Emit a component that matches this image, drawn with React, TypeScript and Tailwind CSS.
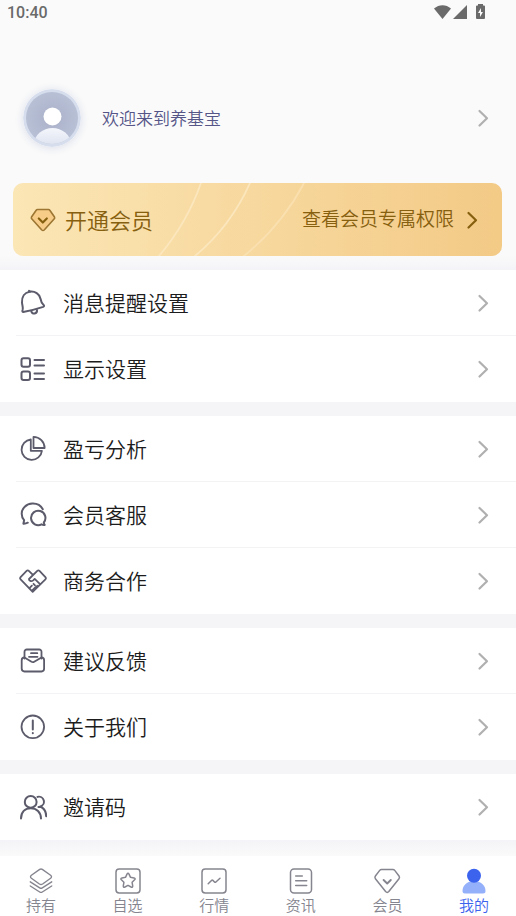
import React from "react";

type IconProps = { className?: string };

const stroke = {
  fill: "none",
  stroke: "currentColor",
  strokeLinecap: "round" as const,
  strokeLinejoin: "round" as const,
};

const Chevron = ({ className }: IconProps) => (
  <svg viewBox="0 0 12 20" className={className} {...stroke} strokeWidth={2.2} aria-hidden="true">
    <path d="M2.5 3l7.5 7.2L2.5 17.5" />
  </svg>
);

const BellIcon = () => (
  <svg viewBox="0 0 28 28" className="size-7" {...stroke} strokeWidth={2} aria-hidden="true">
    <path d="M4.2 22.9C3.2 23 3.2 22 3.6 21C4.4 18.8 3.2 16.500 3 13.500C2.700 8 5.500 3.600 10.500 2.700C16 1.800 20.600 5 21.500 9.700C22 12.300 22.400 14 24.400 15.700C25.400 16.600 25.300 17.500 24.200 17.900C18 20 11 21.800 4.200 22.900Z" />
    <path d="M10 1.900l1 .7M12.300 22.200c.4 1.700 1.700 2.700 3.400 2.300 1.600-.4 2.500-1.600 2.300-3.500" />
  </svg>
);

const DisplayIcon = () => (
  <svg viewBox="0 0 28 28" className="size-7" {...stroke} strokeWidth={2} aria-hidden="true">
    <rect x="2.5" y="3.2" width="8.5" height="8.5" rx="2" />
    <rect x="2.5" y="16.5" width="8.5" height="8.5" rx="2" />
    <path d="M15.5 5h9.5M15.5 10.5h9.5M15.5 18.5h9.5M15.5 24h9.5" />
  </svg>
);

const PieIcon = () => (
  <svg viewBox="0 0 28 28" className="size-7" {...stroke} strokeWidth={1.8} aria-hidden="true">
    <path d="M11.8 4.500A10.200 10.200 0 1 0 22.900 15.800H11.800Z" />
    <path d="M14.500 1.900V13H25.600A11.100 11.100 0 0 0 14.500 1.900Z" />
  </svg>
);

const ChatIcon = () => (
  <svg viewBox="0 0 28 28" className="size-7" {...stroke} strokeWidth={2} aria-hidden="true">
    <path d="M23.800 8.200C21.900 4.600 18 2.300 13.300 2.500C7.300 2.800 2.700 7.200 2.700 12.800C2.700 15.200 3.600 17.500 5.100 19.200L4.400 22.700C6 22.800 7.500 22.400 8.800 21.700" />
    <path d="M24.800 21.500A7.200 7.200 0 1 0 22.600 23.300C23.600 23.900 24.600 24.100 25.700 23.900C25.200 23.200 24.900 22.500 24.800 21.500Z" />
  </svg>
);

const HandshakeIcon = () => (
  <svg viewBox="0 0 28 28" className="size-7" {...stroke} strokeWidth={1.8} aria-hidden="true">
    <path d="M13.700 7.700L9.800 3.900C9.200 3.300 8.200 3.300 7.600 3.900L1.600 10.100C1 10.800 1 11.700 1.600 12.300L13.700 24.800L26.400 12.300C27 11.700 27 10.800 26.400 10.100L20.500 3.900C19.900 3.300 18.900 3.300 18.300 3.900L10 12C9.800 13.800 12.200 14.900 14.200 13.400L15.700 11.900L20.800 16.900" />
    <path d="M10.700 20.800l2.200-2.200M13.500 23.100l2.300-2.300M16.600 20.500l1.700-1.700M14.500 16.800l1.500 1.500" />
  </svg>
);

const MailIcon = () => (
  <svg viewBox="0 0 28 28" className="size-7" {...stroke} strokeWidth={1.8} aria-hidden="true">
    <path d="M5.500 11.500V4.800A2.300 2.300 0 0 1 7.800 2.500H20.200A2.300 2.300 0 0 1 22.500 4.800V11.500" />
    <path d="M5.500 10.500C3.500 10.500 2.700 11.500 2.700 13.200V21.600C2.700 23.600 3.700 24.500 5.500 24.500H22.500C24.300 24.500 25.100 23.600 25.100 21.600V13.200C25.100 11.500 24.300 10.500 22.500 10.500L15.200 14.700C14.300 15.200 13.400 15.200 12.500 14.700Z" />
    <path d="M12 6.200h6.300M10 9.800h8.500" />
  </svg>
);

const AboutIcon = () => (
  <svg viewBox="0 0 28 28" className="size-7" {...stroke} strokeWidth={1.8} aria-hidden="true">
    <circle cx="13.8" cy="13.8" r="11.3" />
    <path d="M13.8 7.5v9M13.8 20v.2" strokeWidth={2} />
  </svg>
);

const PeopleIcon = () => (
  <svg viewBox="0 0 28 28" className="size-7" {...stroke} strokeWidth={2} aria-hidden="true">
    <circle cx="11.7" cy="8.9" r="5.9" />
    <path d="M2 25.500C2 19 6 15.200 11.700 15.200S22 19 22 25.500" />
    <path d="M18.500 3.900A4.900 4.900 0 0 1 21.300 13.500C25 15.300 27.200 18.700 27.200 23.300M19.500 14H21" />
  </svg>
);

const LayersIcon = () => (
  <svg viewBox="0 0 28 28" className="size-7" {...stroke} strokeWidth={1.4} aria-hidden="true">
    <path d="M12.700 2.400Q14 1.600 15.300 2.400L23.600 8.200Q25.400 9.700 23.600 11.200L15.600 17Q14 17.900 12.400 17L4.400 11.200Q2.600 9.700 4.400 8.200Z" />
    <path d="M3.300 14.800L12.700 20.800Q14 21.600 15.300 20.800L24.700 14.800M3.300 19L12.700 25Q14 25.800 15.300 25L24.700 19" />
  </svg>
);

const StarIcon = () => (
  <svg viewBox="0 0 28 28" className="size-7" {...stroke} strokeWidth={1.5} aria-hidden="true">
    <rect x="2" y="2" width="24" height="24" rx="3.2" />
    <path d="M13 7.200Q14 5.500 15 7.200L16.500 10.300L20 10.900Q21.900 11.400 20.600 12.800L18.100 15.300L18.700 18.900Q18.800 20.800 17.100 20L14 18.300L10.900 20Q9.200 20.800 9.300 18.900L9.900 15.300L7.400 12.800Q6.100 11.400 8 10.900L11.500 10.300Z" />
  </svg>
);

const TrendIcon = () => (
  <svg viewBox="0 0 28 28" className="size-7" {...stroke} strokeWidth={1.5} aria-hidden="true">
    <rect x="2" y="2" width="24" height="24" rx="3.2" />
    <path d="M8.200 16.800L11.500 13.400Q12.200 12.700 12.900 13.400L14.500 15Q15.200 15.700 15.900 15L20 11.200" />
  </svg>
);

const NewsIcon = () => (
  <svg viewBox="0 0 28 28" className="size-7" {...stroke} strokeWidth={1.5} aria-hidden="true">
    <rect x="3.5" y="2" width="21" height="24" rx="3.5" />
    <path d="M8.700 9h6.600M8.700 13.800h11M8.700 18.600h11" />
  </svg>
);

const DiamondIcon = () => (
  <svg viewBox="0 0 28 28" className="size-7" {...stroke} strokeWidth={1.5} aria-hidden="true">
    <path d="M8.500 2.500H19.900Q21 2.500 21.700 3.400L26 9Q27 10.400 26 11.700L15.800 24.500Q14.200 26.300 12.600 24.500L2.400 11.700Q1.400 10.400 2.400 9L6.700 3.400Q7.400 2.500 8.500 2.500Z" />
    <path d="M10.600 13l3.600 3.500 3.600-3.500" strokeWidth={1.9} />
  </svg>
);

const MeIcon = () => (
  <svg viewBox="0 0 28 28" className="size-7" aria-hidden="true">
    <path d="M2.500 24C2.500 18.500 7 14 14 14S25.500 18.500 25.500 24Q25.500 26.500 23 26.500H5Q2.500 26.500 2.500 24Z" fill="#94b0fa" />
    <circle cx="14" cy="8.7" r="7" fill="#3c63ee" />
  </svg>
);

const groups = [
  [
    { label: "消息提醒设置", Icon: BellIcon },
    { label: "显示设置", Icon: DisplayIcon },
  ],
  [
    { label: "盈亏分析", Icon: PieIcon },
    { label: "会员客服", Icon: ChatIcon },
    { label: "商务合作", Icon: HandshakeIcon },
  ],
  [
    { label: "建议反馈", Icon: MailIcon },
    { label: "关于我们", Icon: AboutIcon },
  ],
  [{ label: "邀请码", Icon: PeopleIcon }],
];

const tabs = [
  { label: "持有", Icon: LayersIcon },
  { label: "自选", Icon: StarIcon },
  { label: "行情", Icon: TrendIcon },
  { label: "资讯", Icon: NewsIcon },
  { label: "会员", Icon: DiamondIcon },
  { label: "我的", Icon: MeIcon, active: true },
];

const StatusBar = () => (
  <div className="flex h-6 items-center justify-between pl-[7px] pr-7 text-[#6a6a6a]">
    <span className="pt-0.5 font-[Roboto,sans-serif] text-base leading-6 font-medium">10:40</span>
    <svg viewBox="0 0 56 18" className="h-[18px] w-14" fill="currentColor" aria-hidden="true">
      <path d="M2 5.500C7 1 14 1 19 5.500L10.500 16Z" />
      <path d="M35 2V16H21Z" />
      <path d="M46 1h5v1.500h1Q53 2.500 53 3.500V15Q53 16 52 16H45Q44 16 44 15V3.500Q44 2.500 45 2.500H46Z" />
      <path d="M49 5L46 10h2v4l3-5h-2Z" fill="#fafafa" />
    </svg>
  </div>
);

const Avatar = () => (
  <svg viewBox="0 0 58 58" className="size-[58px] rounded-full shadow-[0_1px_8px_0_#d9ddea]" aria-hidden="true">
    <defs>
      <radialGradient id="face">
        <stop offset="0" stopColor="#a9b0c8" />
        <stop offset="1" stopColor="#b8c0d6" />
      </radialGradient>
      <linearGradient id="body" x1="0" y1="0" x2="0" y2="1">
        <stop offset="0" stopColor="#f4f6fb" />
        <stop offset="1" stopColor="#cdd5e8" />
      </linearGradient>
      <clipPath id="disc">
        <circle cx="29" cy="29" r="26" />
      </clipPath>
    </defs>
    <circle cx="29" cy="29" r="29" fill="#d6deed" />
    <circle cx="29" cy="29" r="26" fill="url(#face)" />
    <ellipse cx="29.5" cy="54" rx="18" ry="15" fill="url(#body)" clipPath="url(#disc)" />
    <circle cx="29.500" cy="27.500" r="9" fill="#fff" />
  </svg>
);

const VipBanner = () => (
  <button
    type="button"
    className="relative ml-[13px] mr-3.5 flex h-[73px] items-center overflow-hidden rounded-[10px] bg-linear-to-r from-[#fbe6b5] to-[#f3ca86] pl-4 pr-6 text-[#86600f]"
  >
    <svg viewBox="0 0 160 73" className="absolute left-[140px] top-0 h-[73px] w-40" {...stroke} stroke="#fbe6bd" strokeWidth={1.8} aria-hidden="true">
      <path d="M48 0Q34 40 6 73M97 0Q78 43 42 73" />
      <path d="M151 0Q129 42 91 73" opacity={0.6} />
    </svg>
    <svg viewBox="0 0 28 28" className="size-7" {...stroke} strokeWidth={1.6} aria-hidden="true">
      <path d="M8.500 3.500H19.500Q20.300 3.500 20.800 4.200L25.500 11Q26 12 25.300 12.800L15.200 24Q14 25 12.800 24L2.700 12.800Q2 12 2.500 11L7.200 4.200Q7.700 3.500 8.500 3.500Z" fill="#f6cc88" stroke="#9c7632" />
      <path d="M9.800 12.500l4 4 4-4" strokeWidth={2.2} />
    </svg>
    <span className="ml-2 pb-0.5 text-[22px] leading-8">开通会员</span>
    <span className="ml-auto pb-1 text-[19px] leading-7">查看会员专属权限</span>
    <Chevron className="ml-3 h-5 w-3" />
  </button>
);

export default function App() {
  return (
    <div className="flex min-h-screen flex-col bg-[#fafafa] font-['Noto_Sans_CJK_SC',sans-serif] font-[350] text-[#1c1c1c]">
      <StatusBar />
      <main className="flex grow flex-col">
        <button type="button" className="mb-9 mt-[65px] flex items-center pl-[23px] pr-[27px] text-left">
          <Avatar />
          <span className="ml-[21px] grow text-[17px] leading-6 text-[#555588]">欢迎来到养基宝</span>
          <Chevron className="h-5 w-3 text-[#b0b0b0]" />
        </button>
        <VipBanner />
        <div className="h-3.5 bg-linear-to-b from-[#fafafa] to-[#f4f4f8]" />
        <div className="flex flex-col gap-3.5 bg-[#f5f5f8]">
          {groups.map((items, i) => (
            <ul key={i} className="bg-white">
              {items.map(({ label, Icon }, j) => (
                <li key={label} className="relative h-[66px]">
                  <button type="button" className="flex size-full items-center pl-[19px] pr-[27px] text-left">
                    <span className="text-[#5b5b6b]">
                      <Icon />
                    </span>
                    <span className="ml-4 grow pb-0.5 text-[21px] leading-8">{label}</span>
                    <Chevron className="h-5 w-3 text-[#b0b0b0]" />
                  </button>
                  {j < items.length - 1 && <div className="absolute bottom-0 left-4 right-0 h-px bg-[#f3f3f5]" />}
                </li>
              ))}
            </ul>
          ))}
        </div>
        <div className="h-4 bg-linear-to-b from-[#f4f4f8] to-[#fafafa]" />
      </main>
      <nav className="sticky bottom-0 flex h-[60px] justify-between bg-white pl-[26px] pr-[27px]">
        {tabs.map(({ label, Icon, active }) => (
          <a
            key={label}
            href="#"
            aria-current={active ? "page" : undefined}
            className={`flex w-[30px] flex-col items-center pt-[11px] ${active ? "text-[#3c63ee]" : "text-[#85858f]"}`}
          >
            <Icon />
            <span className="text-[15px] leading-5">{label}</span>
          </a>
        ))}
      </nav>
    </div>
  );
}
